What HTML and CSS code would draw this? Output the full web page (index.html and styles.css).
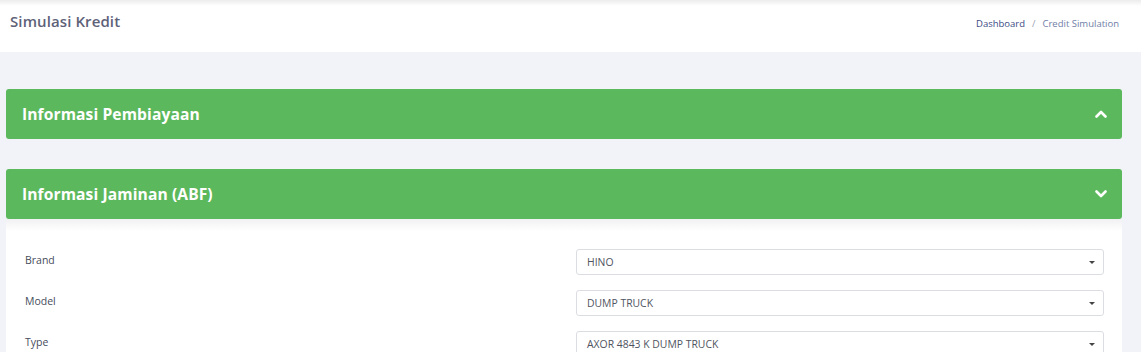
FILE: index.html
```html
<!DOCTYPE html>
<html lang="id">
<head>
<meta charset="utf-8">
<title>Simulasi Kredit</title>
<link rel="stylesheet" href="styles.css">
</head>
<body>
<header class="subheader">
  <h3 class="page-title">Simulasi Kredit</h3>
  <nav class="breadcrumb">
    <a class="crumb-link" href="#">Dashboard</a>
    <span class="crumb-sep">/</span>
    <span class="crumb-current">Credit Simulation</span>
  </nav>
</header>
<main class="content">
  <section class="panel">
    <div class="panel-head">
      <span class="panel-title">Informasi Pembiayaan</span>
      <svg class="chevron" width="12" height="8" viewBox="0 0 12 8"><path d="M1.5 6.5 L6 2 L10.5 6.5" fill="none" stroke="#fff" stroke-width="2.6" stroke-linecap="round" stroke-linejoin="round"/></svg>
    </div>
  </section>
  <section class="panel">
    <div class="panel-head">
      <span class="panel-title">Informasi Jaminan (ABF)</span>
      <svg class="chevron" width="12" height="8" viewBox="0 0 12 8"><path d="M1.5 1.5 L6 6 L10.5 1.5" fill="none" stroke="#fff" stroke-width="2.6" stroke-linecap="round" stroke-linejoin="round"/></svg>
    </div>
    <div class="panel-body">
      <div class="form-row">
        <label class="form-label">Brand</label>
        <div class="select"><span>HINO</span><i class="caret"></i></div>
      </div>
      <div class="form-row">
        <label class="form-label">Model</label>
        <div class="select"><span>DUMP TRUCK</span><i class="caret"></i></div>
      </div>
      <div class="form-row">
        <label class="form-label">Type</label>
        <div class="select"><span>AXOR 4843 K DUMP TRUCK</span><i class="caret"></i></div>
      </div>
    </div>
  </section>
</main>
</body>
</html>
```
FILE: styles.css
```css
* { box-sizing: border-box; }
html, body { margin: 0; padding: 0; }
body {
  background: #f2f3f8;
  font-family: "Open Sans", "Liberation Sans", sans-serif;
  overflow: hidden;
}
.subheader {
  height: 52px;
  background: linear-gradient(#ececec 0, #ffffff 6px);
  display: flex;
  align-items: flex-start;
  justify-content: space-between;
  padding: 11px 22px 0 10px;
}
.page-title {
  margin: 0;
  font-size: 15px;
  font-weight: 600;
  color: #5e6278;
  line-height: 20px;
  letter-spacing: 0.1px;
}
.breadcrumb {
  display: flex;
  align-items: center;
  gap: 6px;
  font-size: 9.5px;
  line-height: 20px;
  padding-top: 3px;
}
.crumb-link { color: #3d4a84; text-decoration: none; }
.crumb-sep { color: #9aa0b8; margin: 0 1px; }
.crumb-current { color: #6f7ea6; }
.content {
  padding: 37px 19px 0 6px;
  display: flex;
  flex-direction: column;
  gap: 30px;
}
.panel { display: flex; flex-direction: column; }
.panel-head {
  height: 50px;
  background: #5cb85c;
  border-radius: 3px;
  display: flex;
  align-items: center;
  justify-content: space-between;
  padding: 0 15px 0 16px;
}
.panel-title {
  color: #ffffff;
  font-size: 15.6px;
  font-weight: 700;
  letter-spacing: 0.1px;
}
.chevron { display: block; }
.panel-body {
  background: #ffffff;
  background-image: linear-gradient(#f1f1f3 0, #ffffff 12px);
  padding: 30px 18px 0 19px;
  display: flex;
  flex-direction: column;
  gap: 15px;
}
.form-row {
  display: grid;
  grid-template-columns: 1fr 528px;
  align-items: center;
}
.form-label {
  font-size: 10.5px;
  color: #464c5c;
  padding-bottom: 4px;
}
.select {
  height: 26px;
  border: 1px solid #dcdde2;
  border-radius: 3px;
  background: #fff;
  display: flex;
  align-items: center;
  justify-content: space-between;
  padding: 0 8px 0 10px;
  font-size: 10.4px;
  color: #4f5461;
}
.caret {
  width: 0;
  height: 0;
  border-left: 3.5px solid transparent;
  border-right: 3.5px solid transparent;
  border-top: 3.5px solid #444;
}
```
